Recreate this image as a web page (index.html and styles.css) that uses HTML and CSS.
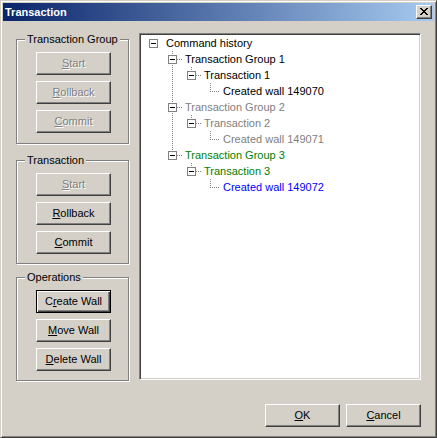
FILE: index.html
```html
<!DOCTYPE html>
<html>
<head>
<meta charset="utf-8">
<title>Transaction</title>
<link rel="stylesheet" href="styles.css">
</head>
<body>
<div class="window">
  <div class="titlebar">
    <span class="title">Transaction</span>
    <button class="close" aria-label="Close">
      <svg width="14" height="12" viewBox="0 0 14 12" shape-rendering="crispEdges">
        <path d="M3 2h2v1h1v1h2v-1h1v-1h2v1h-1v1h-1v1h-1v1h1v1h1v1h1v1h-2v-1h-1v-1h-2v1h-1v1h-2v-1h1v-1h1v-1h1v-1h-1v-1h-1v-1h-1z" fill="#000"/>
      </svg>
    </button>
  </div>
  <div class="content">
    <div class="left">
      <div class="group group--tg">
        <div class="group-title">Transaction Group</div>
        <div class="stack">
          <div class="btn disabled"><u>S</u>tart</div>
          <div class="btn disabled"><u>R</u>ollback</div>
          <div class="btn disabled"><u>C</u>ommit</div>
        </div>
      </div>
      <div class="group group--t">
        <div class="group-title">Transaction</div>
        <div class="stack">
          <div class="btn disabled"><u>S</u>tart</div>
          <div class="btn"><u>R</u>ollback</div>
          <div class="btn"><u>C</u>ommit</div>
        </div>
      </div>
      <div class="group">
        <div class="group-title">Operations</div>
        <div class="stack">
          <div class="btn default">C<u>r</u>eate Wall</div>
          <div class="btn"><u>M</u>ove Wall</div>
          <div class="btn"><u>D</u>elete Wall</div>
        </div>
      </div>
    </div>
    <div class="tree">
      <div class="row">
        <svg class="lines" width="23" height="16" shape-rendering="crispEdges">
          <rect x="8.5" y="4.5" width="8" height="8" fill="#fff" stroke="#808080"/>
          <line x1="10" y1="8.5" x2="15" y2="8.5" stroke="#000"/>
        </svg>
        <span class="label">Command history</span>
      </div>
      <div class="row">
        <svg class="lines" width="42" height="16" shape-rendering="crispEdges">
          <line x1="31.5" y1="0" x2="31.5" y2="16" stroke="#808080" stroke-dasharray="1 1"/>
          <line x1="36" y1="8.5" x2="41" y2="8.5" stroke="#808080" stroke-dasharray="1 1"/>
          <rect x="27.5" y="4.5" width="8" height="8" fill="#fff" stroke="#808080"/>
          <line x1="29" y1="8.5" x2="34" y2="8.5" stroke="#000"/>
        </svg>
        <span class="label">Transaction Group 1</span>
      </div>
      <div class="row">
        <svg class="lines" width="61" height="16" shape-rendering="crispEdges">
          <line x1="31.5" y1="0" x2="31.5" y2="16" stroke="#808080" stroke-dasharray="1 1"/>
          <line x1="50.5" y1="0" x2="50.5" y2="8" stroke="#808080" stroke-dasharray="1 1"/>
          <line x1="55" y1="8.5" x2="60" y2="8.5" stroke="#808080" stroke-dasharray="1 1"/>
          <rect x="46.5" y="4.5" width="8" height="8" fill="#fff" stroke="#808080"/>
          <line x1="48" y1="8.5" x2="53" y2="8.5" stroke="#000"/>
        </svg>
        <span class="label">Transaction 1</span>
      </div>
      <div class="row">
        <svg class="lines" width="80" height="16" shape-rendering="crispEdges">
          <line x1="31.5" y1="0" x2="31.5" y2="16" stroke="#808080" stroke-dasharray="1 1"/>
          <line x1="69.5" y1="0" x2="69.5" y2="8" stroke="#808080" stroke-dasharray="1 1"/>
          <line x1="69" y1="8.5" x2="79" y2="8.5" stroke="#808080" stroke-dasharray="1 1"/>
        </svg>
        <span class="label">Created wall 149070</span>
      </div>
      <div class="row row--gray">
        <svg class="lines" width="42" height="16" shape-rendering="crispEdges">
          <line x1="31.5" y1="0" x2="31.5" y2="16" stroke="#808080" stroke-dasharray="1 1"/>
          <line x1="36" y1="8.5" x2="41" y2="8.5" stroke="#808080" stroke-dasharray="1 1"/>
          <rect x="27.5" y="4.5" width="8" height="8" fill="#fff" stroke="#808080"/>
          <line x1="29" y1="8.5" x2="34" y2="8.5" stroke="#000"/>
        </svg>
        <span class="label">Transaction Group 2</span>
      </div>
      <div class="row row--gray">
        <svg class="lines" width="61" height="16" shape-rendering="crispEdges">
          <line x1="31.5" y1="0" x2="31.5" y2="16" stroke="#808080" stroke-dasharray="1 1"/>
          <line x1="50.5" y1="0" x2="50.5" y2="8" stroke="#808080" stroke-dasharray="1 1"/>
          <line x1="55" y1="8.5" x2="60" y2="8.5" stroke="#808080" stroke-dasharray="1 1"/>
          <rect x="46.5" y="4.5" width="8" height="8" fill="#fff" stroke="#808080"/>
          <line x1="48" y1="8.5" x2="53" y2="8.5" stroke="#000"/>
        </svg>
        <span class="label">Transaction 2</span>
      </div>
      <div class="row row--gray">
        <svg class="lines" width="80" height="16" shape-rendering="crispEdges">
          <line x1="31.5" y1="0" x2="31.5" y2="16" stroke="#808080" stroke-dasharray="1 1"/>
          <line x1="69.5" y1="0" x2="69.5" y2="8" stroke="#808080" stroke-dasharray="1 1"/>
          <line x1="69" y1="8.5" x2="79" y2="8.5" stroke="#808080" stroke-dasharray="1 1"/>
        </svg>
        <span class="label">Created wall 149071</span>
      </div>
      <div class="row row--green">
        <svg class="lines" width="42" height="16" shape-rendering="crispEdges">
          <line x1="31.5" y1="0" x2="31.5" y2="8" stroke="#808080" stroke-dasharray="1 1"/>
          <line x1="36" y1="8.5" x2="41" y2="8.5" stroke="#808080" stroke-dasharray="1 1"/>
          <rect x="27.5" y="4.5" width="8" height="8" fill="#fff" stroke="#808080"/>
          <line x1="29" y1="8.5" x2="34" y2="8.5" stroke="#000"/>
        </svg>
        <span class="label">Transaction Group 3</span>
      </div>
      <div class="row row--green">
        <svg class="lines" width="61" height="16" shape-rendering="crispEdges">
          <line x1="50.5" y1="0" x2="50.5" y2="8" stroke="#808080" stroke-dasharray="1 1"/>
          <line x1="55" y1="8.5" x2="60" y2="8.5" stroke="#808080" stroke-dasharray="1 1"/>
          <rect x="46.5" y="4.5" width="8" height="8" fill="#fff" stroke="#808080"/>
          <line x1="48" y1="8.5" x2="53" y2="8.5" stroke="#000"/>
        </svg>
        <span class="label">Transaction 3</span>
      </div>
      <div class="row row--blue">
        <svg class="lines" width="80" height="16" shape-rendering="crispEdges">
          <line x1="69.5" y1="0" x2="69.5" y2="8" stroke="#808080" stroke-dasharray="1 1"/>
          <line x1="69" y1="8.5" x2="79" y2="8.5" stroke="#808080" stroke-dasharray="1 1"/>
        </svg>
        <span class="label">Created wall 149072</span>
      </div>
    </div>
  </div>
  <div class="footer">
    <div class="btn"><u>O</u>K</div>
    <div class="btn"><u>C</u>ancel</div>
  </div>
</div>
</body>
</html>
```
FILE: styles.css
```css
* { box-sizing: border-box; }
html, body { margin: 0; padding: 0; background: #d4d0c8; }
body {
  font-family: "Liberation Sans", Arial, sans-serif;
  font-size: 11px;
  color: #000;
}
.window {
  width: 437px;
  height: 438px;
  background: #d4d0c8;
  border: 1px solid;
  border-color: #d4d0c8 #404040 #404040 #d4d0c8;
  box-shadow: inset 1px 1px 0 #fff, inset -1px -1px 0 #808080;
  padding: 2px;
}
.titlebar {
  height: 18px;
  display: flex;
  align-items: center;
  justify-content: space-between;
  padding-left: 2px;
  padding-right: 2px;
  background: linear-gradient(to right, #0a246a, #a6caf0);
}
.title {
  color: #fff;
  font-weight: bold;
  font-size: 11px;
  line-height: 13px;
}
.close {
  width: 16px;
  height: 14px;
  padding: 0;
  margin: 0;
  background: #d4d0c8;
  border: 1px solid;
  border-color: #fff #404040 #404040 #fff;
  box-shadow: inset -1px -1px 0 #808080;
  display: flex;
  align-items: center;
  justify-content: center;
}
.close svg { display: block; }
.content {
  display: flex;
  gap: 10px;
  padding: 12px 13px 0 13px;
}
.left {
  width: 113px;
  display: flex;
  flex-direction: column;
  padding-top: 6px;
}
.group {
  border: 1px solid #808080;
  box-shadow: 1px 1px 0 #fff, inset 1px 1px 0 #fff;
  padding: 0 0 9px 19px;
}
.group--tg { margin-bottom: 16px; padding-bottom: 10px; }
.group--t { margin-bottom: 13px; }
.group-title {
  width: fit-content;
  margin: -7px 0 6px -11px;
  padding: 0 2px;
  line-height: 13px;
  background: #d4d0c8;
  white-space: nowrap;
}
.stack {
  display: flex;
  flex-direction: column;
  gap: 6px;
}
.btn {
  width: 75px;
  height: 23px;
  border: 1px solid;
  border-color: #fff #404040 #404040 #fff;
  box-shadow: inset -1px -1px 0 #808080, inset 1px 1px 0 #d4d0c8;
  background: #d4d0c8;
  text-align: center;
  line-height: 20px;
  white-space: nowrap;
}
.btn.disabled {
  color: #808080;
  text-shadow: 1px 1px 0 #fff;
}
.btn.default {
  border-color: #000;
  box-shadow: inset 1px 1px 0 #fff, inset -1px -1px 0 #404040, inset -2px -2px 0 #808080;
}
.btn u { text-underline-offset: 1px; }
.tree {
  width: 282px;
  height: 347px;
  background: #fff;
  border: 1px solid;
  border-color: #808080 #fff #fff #808080;
  box-shadow: inset 1px 1px 0 #404040, inset -1px -1px 0 #d4d0c8;
  padding: 1px;
}
.row {
  display: flex;
  align-items: center;
  height: 16px;
  line-height: 16px;
}
.lines { display: block; flex: none; }
.label { padding-left: 2px; white-space: nowrap; }
.row--gray { color: #808080; }
.row--green { color: #008000; }
.row--blue { color: #0000ff; }
.footer {
  display: flex;
  justify-content: flex-end;
  gap: 6px;
  padding: 23px 13px 0 0;
}
```
